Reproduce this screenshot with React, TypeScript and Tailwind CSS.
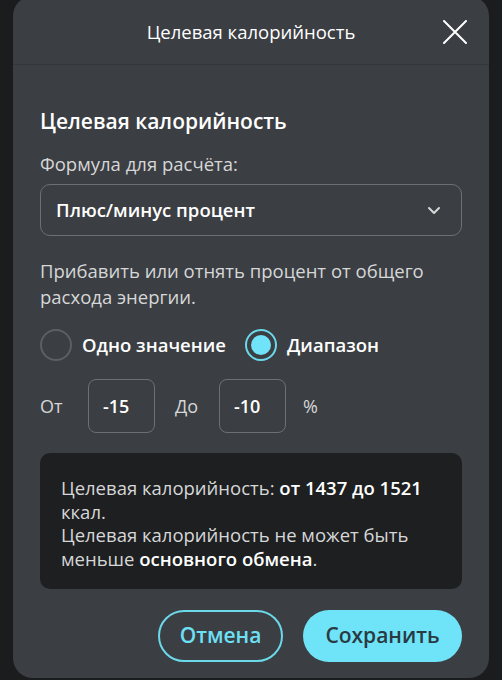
import React from "react";

export default function App() {
  return (
    <div className="w-[502px] h-[680px] bg-[#1b1c1e] overflow-hidden" style={{ fontFamily: '"Open Sans", sans-serif' }}>
      <div className="mx-[13px] mt-[-4px] h-[682px] bg-[#3b3e42] rounded-[20px] flex flex-col">
        <div className="h-[69px] flex items-center justify-center relative border-b border-[#34373a]">
          <span className="text-[18.5px] text-white mt-[4px]">Целевая калорийность</span>
          <button className="absolute right-[22px] top-[24px] w-[24px] h-[24px]">
            <svg width="24" height="24" viewBox="0 0 24 24" fill="none" stroke="#fff" strokeWidth="2" strokeLinecap="round">
              <path d="M1 1L23 23M23 1L1 23" />
            </svg>
          </button>
        </div>
        <div className="px-[27px] pt-[42px] flex flex-col">
          <div className="text-[21px] font-semibold text-white leading-[28px]">Целевая калорийность</div>
          <div className="mt-[17px] text-[18.5px] text-[#d6d7d8] leading-[24px]">Формула для расчёта:</div>
          <div className="mt-[8px] h-[52px] border border-[#6c6f73] rounded-[10px] flex items-center justify-between px-[15px]">
            <span className="text-[18.5px] font-semibold text-white">Плюс/минус процент</span>
            <svg width="14" height="9" viewBox="0 0 14 9" fill="none" stroke="#d6d7d8" strokeWidth="2" strokeLinecap="round" strokeLinejoin="round" className="mr-[5px]">
              <path d="M2 2l5 5 5-5" />
            </svg>
          </div>
          <div className="mt-[22px] text-[18.5px] text-[#d6d7d8] leading-[26px]">
            Прибавить или отнять процент от общего расхода энергии.
          </div>
          <div className="mt-[19px] flex items-center">
            <div className="w-[32px] h-[32px] rounded-full border-2 border-[#5c5f63]" />
            <span className="ml-[10px] text-[18.5px] font-semibold text-white">Одно значение</span>
            <div className="ml-[19px] w-[32px] h-[32px] rounded-full border-2 border-[#6bd9ea] flex items-center justify-center">
              <div className="w-[20px] h-[20px] rounded-full bg-[#70e3f8]" />
            </div>
            <span className="ml-[10px] text-[18.5px] font-semibold text-white">Диапазон</span>
          </div>
          <div className="mt-[18px] flex items-center">
            <span className="text-[18px] text-[#d6d7d8] w-[48px]">От</span>
            <div className="w-[67px] h-[54px] border border-[#6c6f73] rounded-[8px] flex items-center px-[14px]">
              <span className="text-[18px] font-semibold text-white">-15</span>
            </div>
            <span className="ml-[20px] text-[18px] text-[#d6d7d8] w-[44px]">До</span>
            <div className="w-[67px] h-[54px] border border-[#6c6f73] rounded-[8px] flex items-center px-[14px]">
              <span className="text-[18px] font-semibold text-white">-10</span>
            </div>
            <span className="ml-[17px] text-[18px] text-[#d6d7d8]">%</span>
          </div>
          <div className="mt-[20px] bg-[#1e1f21] rounded-[10px] px-[21px] pt-[23px] pb-[19px] text-[18.5px] leading-[23.5px] text-[#d6d7d8]">
            <p>
              Целевая калорийность: <b className="font-semibold text-white">от 1437 до 1521</b> ккал.
            </p>
            <p>
              Целевая калорийность не может быть меньше <b className="font-semibold text-white">основного обмена</b>.
            </p>
          </div>
          <div className="mt-[21px] flex justify-end gap-[20px]">
            <button className="w-[125px] h-[52px] rounded-full border-2 border-[#6bd9ea] text-[#6ee0f5] text-[21px] font-semibold">Отмена</button>
            <button className="w-[159px] h-[52px] rounded-full bg-[#6fe4f8] text-[#2a3a42] text-[21px] font-semibold">Сохранить</button>
          </div>
        </div>
      </div>
    </div>
  );
}
